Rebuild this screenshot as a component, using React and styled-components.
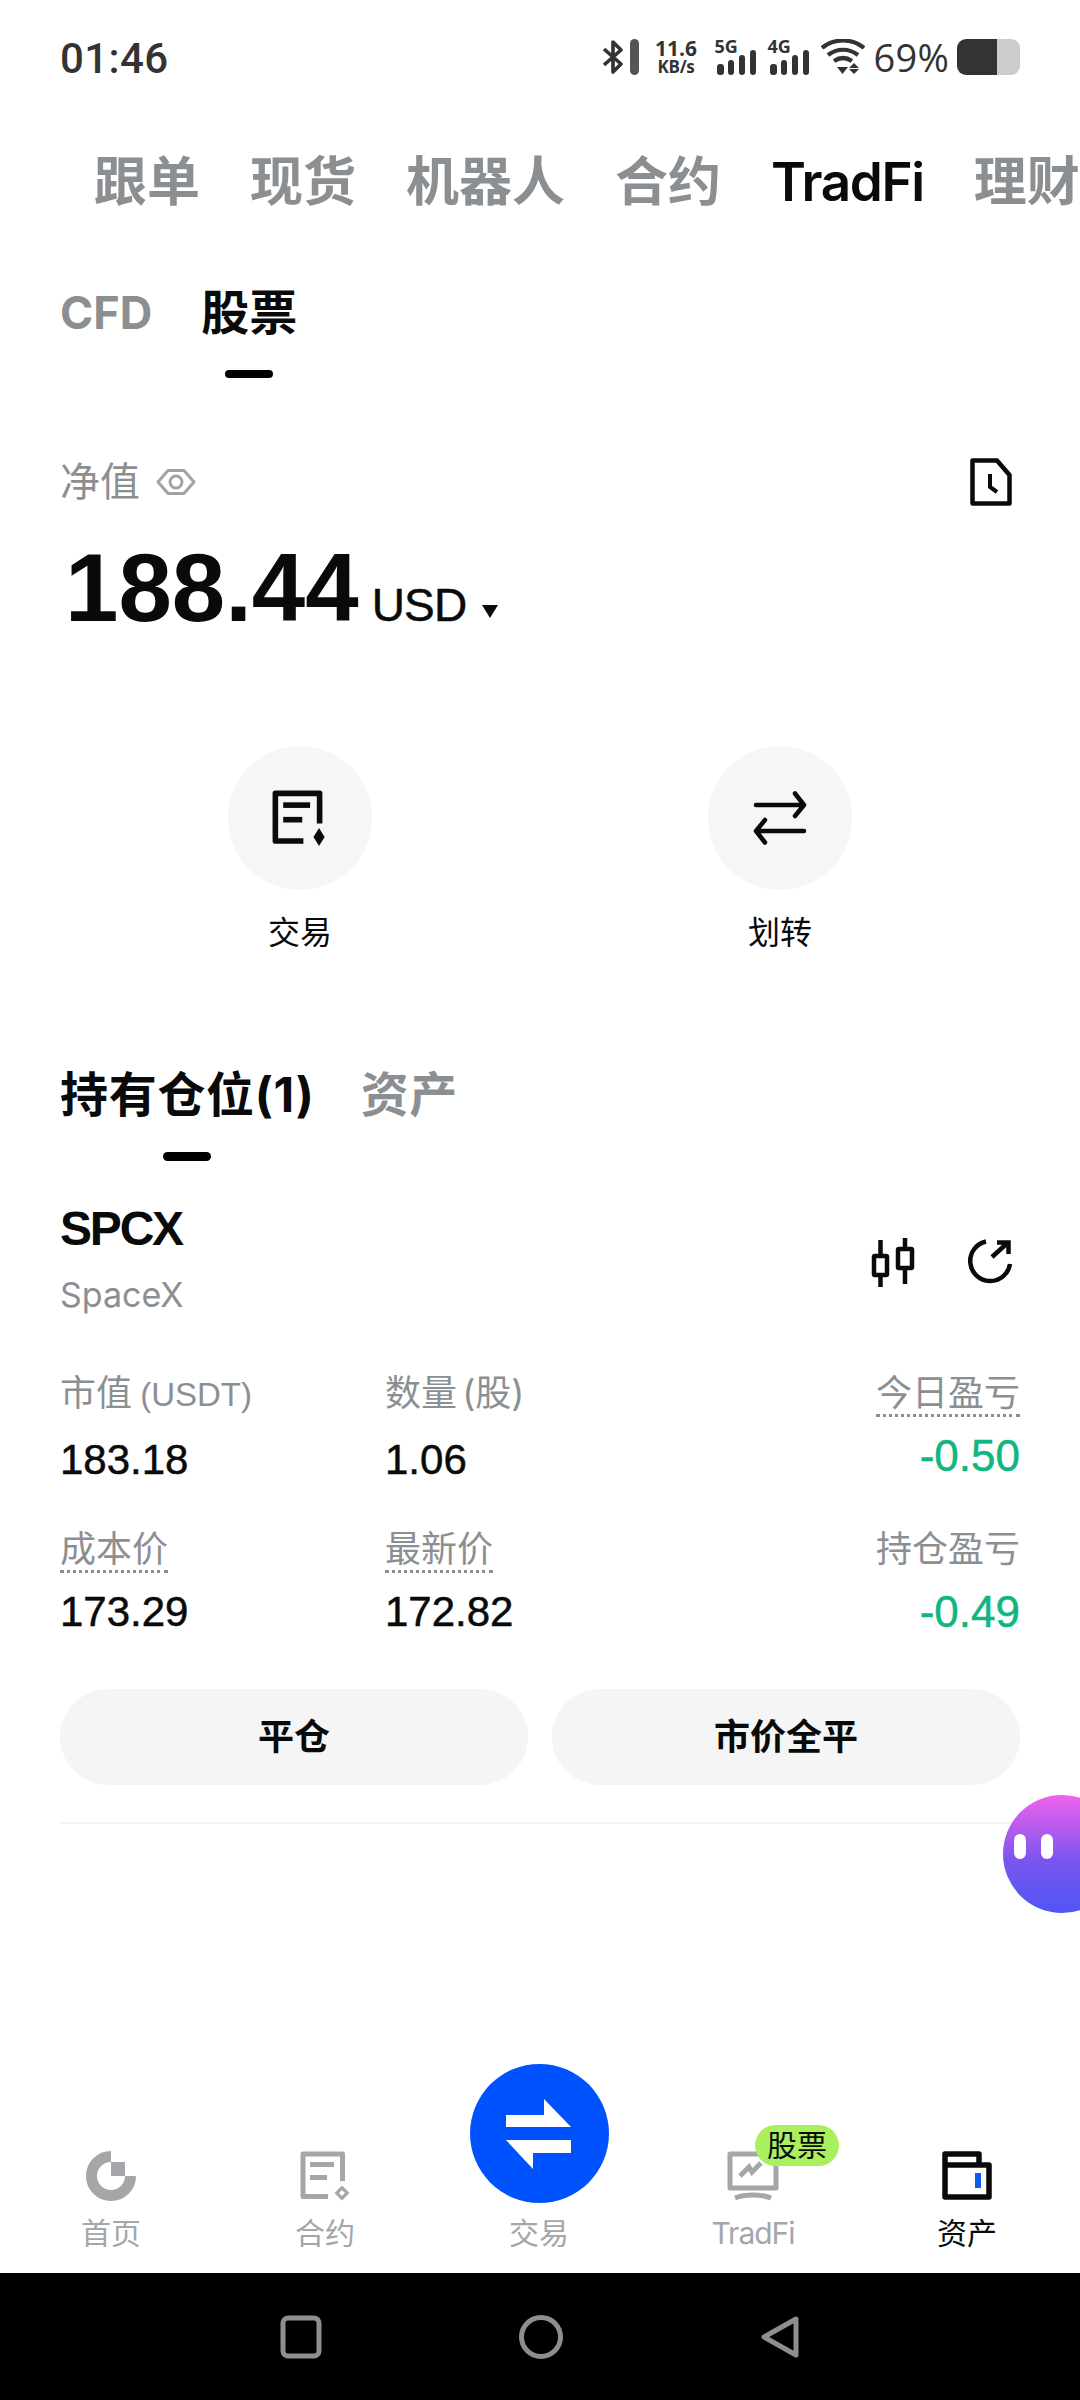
import React from "react";
import styled, { createGlobalStyle } from "styled-components";

const Global = createGlobalStyle`
  html, body { margin: 0; padding: 0; background: #fff; }
  * { box-sizing: border-box; }
`;
const sans = `Inter, "Noto Sans CJK SC", sans-serif`;
const helv = `"Liberation Sans", "Noto Sans CJK SC", sans-serif`;

const Page = styled.div`
  position: relative; width: 1080px; height: 2400px; overflow: hidden;
  display: flex; flex-direction: column; background: #fff; font-family: ${sans}; color: #0a0a0a;
`;
const StatusBar = styled.div`
  height: 114px; flex: none; padding: 0 60px; display: flex; align-items: center; justify-content: space-between; color: #333;
`;
const Time = styled.div`
  font: 500 42px/1 Roboto, sans-serif; letter-spacing: 0.4px; padding-top: 3px;
`;
const StatusRight = styled.div`display: flex; align-items: center; height: 40px;`;
const Speed = styled.div`
  width: 43px; display: flex; flex-direction: column; align-items: center; margin: 0 19px 0 16px; font-family: "Open Sans", sans-serif; font-weight: 700;
`;
const SpeedTop = styled.span`font-size: 21px; line-height: 20px;`;
const SpeedUnit = styled.span`font-size: 17px; line-height: 18px; letter-spacing: -0.3px;`;
const Signal = styled.div`
  position: relative; width: 40px; height: 36px; margin-right: 13px;
  span { position: absolute; left: -2px; top: -2px; font: 700 18px/18px "Open Sans", sans-serif; }
  svg { position: absolute; left: 0; bottom: 0; }
`;
const Wifi = styled.svg`margin-left: -2px;`;
const Percent = styled.div`
  font: 400 38px/1 "Open Sans", sans-serif; margin: 0 8px 0 9px; letter-spacing: 0.2px;
`;
const Battery = styled.div`
  width: 63px; height: 36px; border-radius: 9px; background: linear-gradient(90deg, #333 0 40px, #ccc 40px);
`;
const TopTabs = styled.div`
  height: 136px; flex: none; display: flex; align-items: center; gap: 50px; padding-left: 94px; white-space: nowrap; overflow: hidden;
`;
const TopTab = styled.div`
  font-size: 53px; line-height: 60px; font-weight: ${p => (p.$active ? 600 : 700)}; flex: none; color: ${p => (p.$active ? "#0a0a0a" : "#8c8f92")};
  letter-spacing: ${p => (p.$active ? "-1.4px" : "0")};
`;
const SubTabs = styled.div`height: 130px; flex: none; display: flex; gap: 49px; padding: 33px 60px 0;`;
const TabCol = styled.div`display: flex; flex-direction: column; align-items: center;`;
const SubTab = styled.div`
  font-size: ${p => p.$size}px; line-height: 60px; font-weight: 700; color: ${p => (p.$active ? "#0a0a0a" : "#8c8f92")};
`;
const PosTab = styled(SubTab)`letter-spacing: 0.7px;`;
const Indicator = styled.div`
  width: 48px; height: ${p => p.$h}px; border-radius: 5px; background: #000; margin-top: ${p => p.$mt}px;
`;
const EquityRow = styled.div`
  margin-top: 72px; height: 60px; flex: none; padding: 0 68px 0 60px; display: flex; align-items: center; justify-content: space-between;
`;
const EquityLabel = styled.div`
  display: flex; align-items: center; gap: 16px; font-size: 40px; line-height: 60px; color: #8c8f92;
`;
const ValueRow = styled.div`
  height: 110px; margin-top: 21px; flex: none; padding-left: 65px; display: flex; align-items: baseline;
`;
const BigValue = styled.div`font-family: ${helv}; font-size: 96px; line-height: 110px; font-weight: 700;`;
const Currency = styled.div`font-family: ${helv}; font-size: 46px; margin-left: 13px; letter-spacing: -0.8px; -webkit-text-stroke: 0.5px #0a0a0a;`;
const Caret = styled.div`
  width: 0; height: 0; margin-left: 16px; border-left: 8px solid transparent; border-right: 8px solid transparent; border-top: 13px solid #0a0a0a; align-self: center; margin-top: 46px;
`;
const Actions = styled.div`
  margin-top: 103px; flex: none; padding: 0 60px; display: grid; grid-template-columns: 480px 480px;
`;
const Action = styled.div`display: flex; flex-direction: column; align-items: center; gap: 21px;`;
const ActionCircle = styled.div`
  width: 144px; height: 144px; border-radius: 50%; background: #f5f6f7; display: flex; align-items: center; justify-content: center;
`;
const ActionLabel = styled.div`font-size: 32px; line-height: 44px;`;
const PosTabs = styled.div`
  margin-top: 110px; height: 98px; flex: none; display: flex; gap: 46px; padding: 0 60px;
`;
const PosHeader = styled.div`
  margin-top: 36px; flex: none; padding: 0 65px 0 60px; display: flex; justify-content: space-between; align-items: center;
`;
const Symbol = styled.div`font-family: ${helv}; font-size: 48px; line-height: 60px; font-weight: 700; letter-spacing: -2.2px;`;
const SymbolName = styled.div`font-size: 34px; line-height: 50px; margin-top: 11px; color: #8c8f92;`;
const PosIcons = styled.div`display: flex; align-items: center; gap: 51px; margin-top: 6px;`;
const Grid = styled.div`
  margin-top: 51px; flex: none; padding: 0 60px; display: grid; grid-template-columns: 325px 1fr auto; row-gap: 42px;
`;
const Cell = styled.div`
  display: flex; flex-direction: column; align-items: ${p => (p.$right ? "flex-end" : "flex-start")};
`;
const Label = styled.div`
  font-size: 36px; line-height: 44px; height: 46px; color: #8c8f92; white-space: pre; word-spacing: -5px;
  ${p => p.$dotted && "border-bottom: 3px dotted #8c8f92;"}
`;
const Latin = styled.span`font-family: ${helv}; font-size: 33px; margin-left: 3px;`;
const Value = styled.div`
  font-family: ${helv}; font-size: ${p => (p.$green ? 44 : 42)}px; line-height: 50px; margin-top: ${p => p.$mt}px;
  color: ${p => (p.$green ? "#10b57f" : "#0a0a0a")}; -webkit-text-stroke: 0.5px ${p => (p.$green ? "#10b57f" : "#0a0a0a")};
`;
const Buttons = styled.div`
  margin-top: 52px; flex: none; padding: 0 60px; display: grid; grid-template-columns: 1fr 1fr; gap: 24px;
`;
const Button = styled.div`
  height: 96px; padding-bottom: 6px; border-radius: 48px; background: #f5f5f5; display: flex; align-items: center; justify-content: center;
  font-size: 36px; font-weight: 700;
`;
const Divider = styled.div`margin: 37px 60px 0; height: 2px; background: #f3f3f3; flex: none;`;
const Floating = styled.div`
  position: absolute; left: 1003px; top: 1795px; width: 118px; height: 118px; border-radius: 50%;
  background: linear-gradient(180deg, #f262ee 0%, #7a55ee 55%, #4f55f5 100%);
`;
const Eye = styled.div`
  position: absolute; top: 39px; left: ${p => p.$x}px; width: 12px; height: 25px; border-radius: 6px; background: #fff;
`;
const BottomNav = styled.div`
  position: relative; margin-top: auto; height: 140px; flex: none; display: grid; grid-template-columns: repeat(5, 214px); padding: 0 4px;
`;
const NavItem = styled.div`
  position: relative; display: flex; flex-direction: column; align-items: center; justify-content: flex-end; padding-bottom: 22px;
`;
const NavIcon = styled.div`height: 50px; display: flex; justify-content: center; margin-bottom: 14px; position: relative;`;
const NavLabel = styled.div`
  font-size: 30px; line-height: 36px; color: ${p => (p.$active ? "#0a0a0a" : "#a4a6a9")}; letter-spacing: ${p => p.$tight ? "-1px" : "0"};
`;
const CenterBtn = styled.div`
  position: absolute; left: 470px; top: -69px; width: 139px; height: 139px; border-radius: 50%; background: #0052ff;
  display: flex; align-items: center; justify-content: center;
`;
const Badge = styled.div`
  position: absolute; left: 28px; top: -26px; width: 84px; height: 41px; border-radius: 21px; background: #a9ef5e;
  font-size: 30px; line-height: 41px; text-align: center; color: #0a0a0a;
`;
const SystemBar = styled.div`
  height: 127px; flex: none; background: #000; display: flex; justify-content: center; align-items: flex-start; gap: 197px; padding-top: 42px;
`;

const DocIcon = ({ size = 50, color, solid }) => (
  <svg width={size} height={size} viewBox="0 0 50 50" fill="none">
    <path d="M42.5 30V3H3V45.5H28" stroke={color} strokeWidth="5" strokeLinejoin="round" />
    <rect x="10" y="11" width="24" height="5" fill={color} />
    <rect x="10" y="24" width="17" height="5" fill={color} />
    {solid
      ? <path d="M42 34l5 8-5 8-5-8z" fill={color} />
      : <path d="M42 34.5l7.5 7.5-7.5 7.5-7.5-7.5z M42 39l-3 3 3 3 3-3z" fill={color} fillRule="evenodd" />}
  </svg>
);

const Bars = () => (
  <svg width="40" height="25" viewBox="0 0 40 25" fill="#333">
    <rect x="0" y="14" width="7" height="11" rx="3" />
    <rect x="11" y="10" width="6" height="15" rx="3" />
    <rect x="22" y="5" width="6" height="20" rx="3" />
    <rect x="33" y="0" width="6" height="25" rx="3" />
  </svg>
);

const App = () => (
  <Page>
    <Global />
    <StatusBar>
      <Time>01:46</Time>
      <StatusRight>
        <svg width="36" height="36" viewBox="0 0 36 36" fill="none">
          <path d="M1 10l17 15-8 8V3l8 8L1 26" stroke="#333" strokeWidth="3.6" strokeLinejoin="round" />
          <rect x="27" y="0" width="9" height="36" rx="4.5" fill="#555" />
        </svg>
        <Speed><SpeedTop>11.6</SpeedTop><SpeedUnit>KB/s</SpeedUnit></Speed>
        <Signal><span>5G</span><Bars /></Signal>
        <Signal><span>4G</span><Bars /></Signal>
        <Wifi width="44" height="36" viewBox="0 0 44 36" fill="none">
          <path d="M1 9C13-1 31-1 43 9M7 16c9-7 21-7 30 0M13 22c6-4 12-4 18 0" stroke="#333" strokeWidth="4.2" />
          <path d="M16 28h11l-5.500 7z M33 24l5 5H28zM28 30h10l-5 5z" fill="#333" />
        </Wifi>
        <Percent>69%</Percent>
        <Battery />
      </StatusRight>
    </StatusBar>

    <TopTabs>
      <TopTab>跟单</TopTab>
      <TopTab>现货</TopTab>
      <TopTab>机器人</TopTab>
      <TopTab>合约</TopTab>
      <TopTab $active>TradFi</TopTab>
      <TopTab>理财</TopTab>
    </TopTabs>

    <SubTabs>
      <TabCol><SubTab $size={45}>CFD</SubTab></TabCol>
      <TabCol>
        <SubTab $size={48} $active>股票</SubTab>
        <Indicator $h={8} $mt={27} />
      </TabCol>
    </SubTabs>

    <EquityRow>
      <EquityLabel>
        净值
        <svg width="40" height="30" viewBox="0 0 40 30" fill="none" stroke="#a0a3a6" strokeWidth="3">
          <path d="M2 15L12 3.500H28L38 15 28 26.500H12z" strokeLinejoin="round" />
          <circle cx="20" cy="15" r="6" />
        </svg>
      </EquityLabel>
      <svg width="42" height="48" viewBox="0 0 42 48" fill="none" stroke="#0a0a0a" strokeWidth="4.500">
        <path d="M2.500 2.500H27L39.500 17V45.500H2.500z" strokeLinejoin="round" />
        <path d="M20 16v13l7 5" strokeWidth="4" />
      </svg>
    </EquityRow>

    <ValueRow>
      <BigValue>188.44</BigValue>
      <Currency>USD</Currency>
      <Caret />
    </ValueRow>

    <Actions>
      <Action>
        <ActionCircle><DocIcon size={56} color="#0a0a0a" solid /></ActionCircle>
        <ActionLabel>交易</ActionLabel>
      </Action>
      <Action>
        <ActionCircle>
          <svg width="54" height="54" viewBox="0 0 54 54" fill="none" stroke="#0a0a0a" strokeWidth="4.500" strokeLinecap="round" strokeLinejoin="round">
            <path d="M3 14H51L42 2.500M51 14L42 25" />
            <path d="M51 40H3L12 29M3 40L12 51.500" />
          </svg>
        </ActionCircle>
        <ActionLabel>划转</ActionLabel>
      </Action>
    </Actions>

    <PosTabs>
      <TabCol>
        <PosTab $size={48} $active>持有仓位(1)</PosTab>
        <Indicator $h={9} $mt={27} />
      </TabCol>
      <TabCol><PosTab $size={48}>资产</PosTab></TabCol>
    </PosTabs>

    <PosHeader>
      <div>
        <Symbol>SPCX</Symbol>
        <SymbolName>SpaceX</SymbolName>
      </div>
      <PosIcons>
        <svg width="46" height="50" viewBox="0 0 46 50" fill="none" stroke="#0a0a0a" strokeWidth="4.500" strokeLinejoin="round">
          <rect x="4" y="18" width="13" height="19" rx="1" />
          <path d="M10.500 2v16M10.500 37v12" />
          <rect x="28" y="11" width="14" height="19" rx="1" />
          <path d="M35 0v11M35 30v16" />
        </svg>
        <svg width="48" height="48" viewBox="0 0 48 48" fill="none" stroke="#0a0a0a" strokeWidth="4.500">
          <path d="M19 2.500A20 20 0 1 0 43 25" />
          <path d="M25 18L41 3.500M30 3.500H41.500V15" />
        </svg>
      </PosIcons>
    </PosHeader>

    <Grid>
      <Cell><Label>市值 <Latin>(USDT)</Latin></Label><Value $mt={18}>183.18</Value></Cell>
      <Cell><Label>数量 (股)</Label><Value $mt={18}>1.06</Value></Cell>
      <Cell $right><Label $dotted>今日盈亏</Label><Value $green $mt={14}>-0.50</Value></Cell>
      <Cell><Label $dotted>成本价</Label><Value $mt={14}>173.29</Value></Cell>
      <Cell><Label $dotted>最新价</Label><Value $mt={14}>172.82</Value></Cell>
      <Cell $right><Label>持仓盈亏</Label><Value $green $mt={14}>-0.49</Value></Cell>
    </Grid>

    <Buttons>
      <Button>平仓</Button>
      <Button>市价全平</Button>
    </Buttons>
    <Divider />

    <Floating>
      <Eye $x={11} />
      <Eye $x={38} />
    </Floating>

    <BottomNav>
      <NavItem>
        <NavIcon>
          <svg width="50" height="50" viewBox="0 0 50 50" fill="none">
            <path d="M25 5.500A19.500 19.500 0 1 0 44.500 25" stroke="#a4a6a9" strokeWidth="11" />
            <rect x="25" y="11" width="14" height="14" fill="#a4a6a9" />
          </svg>
        </NavIcon>
        <NavLabel>首页</NavLabel>
      </NavItem>
      <NavItem>
        <NavIcon><DocIcon color="#a4a6a9" /></NavIcon>
        <NavLabel>合约</NavLabel>
      </NavItem>
      <NavItem>
        <NavIcon />
        <NavLabel>交易</NavLabel>
      </NavItem>
      <NavItem>
        <NavIcon>
          <svg width="52" height="50" viewBox="0 0 52 50" fill="none">
            <path d="M3 3H49V37H3z" stroke="#a4a6a9" strokeWidth="5" strokeLinejoin="round" />
            <path d="M13 25l9-9 3 5 9-9" stroke="#a4a6a9" strokeWidth="5" />
            <path d="M8 47c10-4 26-4 36 0" stroke="#a4a6a9" strokeWidth="5" />
          </svg>
          <Badge>股票</Badge>
        </NavIcon>
        <NavLabel $tight>TradFi</NavLabel>
      </NavItem>
      <NavItem>
        <NavIcon>
          <svg width="50" height="50" viewBox="0 0 50 50" fill="none">
            <path d="M3 14V3H37V14H47V46H3zM3 14H37" stroke="#0a0a0a" strokeWidth="5.500" strokeLinejoin="round" />
            <rect x="33" y="22" width="6" height="15" fill="#0b5cf0" />
          </svg>
        </NavIcon>
        <NavLabel $active>资产</NavLabel>
      </NavItem>
      <CenterBtn>
        <svg width="139" height="139" viewBox="0 0 139 139" fill="#fff">
          <path d="M36 51H74V35L101 63H36z" />
          <path d="M101 76H36L63 105V89H101z" />
        </svg>
      </CenterBtn>
    </BottomNav>

    <SystemBar>
      <svg width="42" height="44" viewBox="0 0 42 44" fill="none" stroke="#8e8e8e" strokeWidth="5">
        <rect x="3" y="3" width="36" height="38" rx="5" />
      </svg>
      <svg width="44" height="44" viewBox="0 0 44 44" fill="none" stroke="#8e8e8e" strokeWidth="5">
        <circle cx="22" cy="22" r="19.500" />
      </svg>
      <svg width="40" height="44" viewBox="0 0 40 44" fill="none" stroke="#8e8e8e" strokeWidth="5" strokeLinejoin="round">
        <path d="M36 4V40L4 22z" />
      </svg>
    </SystemBar>
  </Page>
);

export default App;
